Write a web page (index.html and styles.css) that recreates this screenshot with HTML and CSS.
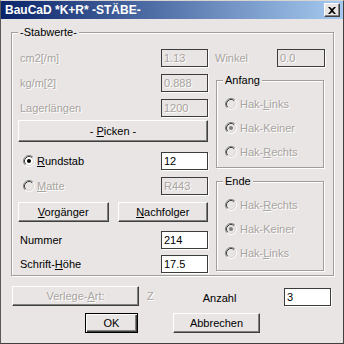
FILE: index.html
```html
<!DOCTYPE html>
<html lang="de">
<head>
  <meta charset="UTF-8">
  <title>BauCaD *K+R* -STÄBE-</title>
  <link rel="stylesheet" href="styles.css">
</head>
<body>
  <svg class="defs" width="0" height="0">
    <symbol id="radio-off" viewBox="0 0 12 12">
      <path d="M2.11 9.89A5.5 5.5 0 0 1 9.89 2.11" fill="none" stroke="#808080"/>
      <path d="M9.89 2.11A5.5 5.5 0 0 1 2.11 9.89" fill="none" stroke="#fff"/>
      <path d="M2.82 9.18A4.5 4.5 0 0 1 9.18 2.82" fill="none" stroke="#404040"/>
      <path d="M9.18 2.82A4.5 4.5 0 0 1 2.82 9.18" fill="none" stroke="#d8d5d2"/>
    </symbol>
    <symbol id="radio-dis" viewBox="0 0 12 12">
      <use href="#radio-off"/>
      <circle cx="6" cy="6" r="2" fill="#808080"/>
    </symbol>
    <symbol id="radio-on" viewBox="0 0 12 12">
      <circle cx="6" cy="6" r="4" fill="#fff"/>
      <use href="#radio-off"/>
      <circle cx="6" cy="6" r="2" fill="#000"/>
    </symbol>
  </svg>

  <div class="window">
    <!-- Title bar -->
    <div class="titlebar">
      <span class="title">BauCaD *K+R* -STÄBE-</span>
      <button class="close">
        <svg width="8" height="7" viewBox="0 0 8 7"><path d="M0 0h2l2 2 2-2h2L5 3.5 8 7H6L4 5 2 7H0l3-3.5z" fill="#000"/></svg>
      </button>
    </div>

    <div class="dialog">
      <fieldset class="group main">
        <legend>-Stabwerte-</legend>
        <div class="columns">
          <!-- Left column -->
          <div class="left">
            <div class="row"><span class="label off">cm2[/m]</span><input class="field off" value="1.13" readonly></div>
            <div class="row r2"><span class="label off">kg/m[2]</span><input class="field off" value="0.888" readonly></div>
            <div class="row r2"><span class="label off">Lagerlängen</span><input class="field off" value="1200" readonly></div>
            <button class="btn picken">- <u>P</u>icken -</button>
            <div class="row r-rund">
              <label class="radio"><svg><use href="#radio-on"/></svg><span><u>R</u>undstab</span></label>
              <input class="field" value="12" readonly>
            </div>
            <div class="row r2">
              <label class="radio off"><svg><use href="#radio-off"/></svg><span><u>M</u>atte</span></label>
              <input class="field off" value="R443" readonly>
            </div>
            <div class="pair">
              <button class="btn"><u>V</u>orgänger</button>
              <button class="btn"><u>N</u>achfolger</button>
            </div>
            <div class="row r-num"><span class="label">Nummer</span><input class="field" value="214" readonly></div>
            <div class="row r-schrift"><span class="label">Schrift-<u>H</u>öhe</span><input class="field" value="17.5" readonly></div>
          </div>

          <!-- Right column -->
          <div class="right">
            <div class="row"><span class="label off winkel">Winkel</span><input class="field off wide" value="0.0" readonly></div>
            <fieldset class="group sub">
              <legend>Anfang</legend>
              <label class="radio off"><svg><use href="#radio-off"/></svg><span>Hak-<u>L</u>inks</span></label>
              <label class="radio off"><svg><use href="#radio-dis"/></svg><span>Hak-Keiner</span></label>
              <label class="radio off"><svg><use href="#radio-off"/></svg><span>Hak-<u>R</u>echts</span></label>
            </fieldset>
            <fieldset class="group sub ende">
              <legend>Ende</legend>
              <label class="radio off"><svg><use href="#radio-off"/></svg><span>Hak-<u>R</u>echts</span></label>
              <label class="radio off"><svg><use href="#radio-dis"/></svg><span>Hak-Keiner</span></label>
              <label class="radio off"><svg><use href="#radio-off"/></svg><span>Hak-<u>L</u>inks</span></label>
            </fieldset>
          </div>
        </div>
      </fieldset>

      <div class="bottom-row">
        <button class="btn verlege"><span class="off">Verlege-<u>A</u>rt:</span></button>
        <span class="z off">Z</span>
        <span class="anzahl">Anzahl</span>
        <input class="field anzahl-field" value="3" readonly>
      </div>

      <div class="actions">
        <button class="btn default ok">OK</button>
        <button class="btn cancel">Abbrechen</button>
      </div>
    </div>
  </div>
</body>
</html>
```

FILE: styles.css
```css
/* Classic Windows dialog */
body {
  margin: 0;
  background: #ffffff;
  font-family: 'Liberation Sans', Arial, sans-serif;
  font-size: 11px;
  color: #000;
}

.defs {
  position: absolute;
}

.window {
  width: 344px;
  height: 344px;
  box-sizing: border-box;
  border: 1px solid;
  border-color: #d8d5d2 #404040 #404040 #5a5a5a;
  background: #e8e5e4;
  display: flex;
  flex-direction: column;
}

.titlebar {
  height: 18px;
  display: flex;
  align-items: center;
  justify-content: space-between;
  padding: 0 3px 0 4px;
  background: linear-gradient(90deg, #0a246a, #a6caf0);
  color: #fff;
  font-weight: bold;
  font-size: 12px;
}

.close {
  width: 16px;
  height: 14px;
  padding: 0;
  display: flex;
  align-items: center;
  justify-content: center;
  background: #e8e5e4;
  border: 1px solid;
  border-color: #fff #404040 #404040 #fff;
  box-shadow: inset -1px -1px #808080;
}

.dialog {
  padding: 0 9px 0 10px;
}

/* Group frames */
.group {
  margin: 7px 0 0;
  border: 1px solid #a09d9a;
  box-shadow: inset 1px 1px #fff, 1px 1px #fff;
  min-width: 0;
}

.group legend {
  padding: 0 2px;
  line-height: 13px;
  background: #e8e5e4;
}

.main {
  padding: 10px 7px 2px 6px;
}

.columns {
  display: flex;
  gap: 7px;
}

.left {
  width: 190px;
  display: flex;
  flex-direction: column;
}

.right {
  width: 111px;
  display: flex;
  flex-direction: column;
}

.row {
  height: 18px;
  display: flex;
  align-items: center;
  justify-content: space-between;
}

.r2 { margin-top: 7px; }
.r-rund { margin-top: 10px; }
.r-num { margin-top: 9px; }
.r-schrift { margin-top: 6px; }

.label {
  margin-left: 2px;
}

.winkel {
  margin-left: 0;
}

.off {
  color: #a8a4a0;
  text-shadow: 1px 1px 0 #fff;
}

.field {
  width: 47px;
  height: 18px;
  box-sizing: border-box;
  margin: 0;
  padding: 0 2px;
  font: inherit;
  color: #000;
  background: #fff;
  border: 1px solid #3c3c3c;
  box-shadow: 1px 1px 0 #fff;
  outline: none;
}

.field.off {
  background: #e8e5e4;
  color: #a8a4a0;
}

.field.wide {
  width: 48px;
  margin-right: 1px;
}

/* Buttons */
.btn {
  height: 20px;
  padding: 0;
  font: inherit;
  color: #000;
  background: #e8e5e4;
  border: 1px solid;
  border-color: #fff #404040 #404040 #fff;
  box-shadow: inset -1px -1px #808080;
}

.picken {
  height: 22px;
  margin-top: 3px;
}

.pair {
  display: flex;
  gap: 9px;
  margin-top: 7px;
}

.pair .btn {
  flex: 1;
}

/* Radios */
.radio {
  display: flex;
  align-items: center;
  gap: 2px;
  height: 16px;
}

.radio svg {
  width: 12px;
  height: 12px;
}

.left .radio {
  margin-left: 5px;
}

.sub {
  margin: 7px 2px 0 1px;
  padding: 9px 4px 7px 8px;
  display: flex;
  flex-direction: column;
  gap: 8px;
}

.sub legend {
  margin-left: -2px;
}

.sub .radio {
  gap: 3px;
}

.ende {
  padding-bottom: 9px;
}

/* Bottom rows */
.bottom-row {
  display: flex;
  align-items: flex-end;
  margin-top: 10px;
}

.verlege {
  width: 127px;
  margin-left: 1px;
}

.z {
  margin-left: 8px;
  align-self: center;
}

.anzahl {
  margin-left: 49px;
  align-self: center;
  margin-top: 4px;
}

.anzahl-field {
  margin-left: auto;
  margin-right: 3px;
}

.actions {
  display: flex;
  gap: 35px;
  margin-top: 7px;
  padding-left: 74px;
}

.ok {
  width: 53px;
}

.default {
  border: 1px solid #000;
  box-shadow: inset 1px 1px #fff, inset -1px -1px #404040, inset -2px -2px #808080;
}

.cancel {
  width: 87px;
}
```
